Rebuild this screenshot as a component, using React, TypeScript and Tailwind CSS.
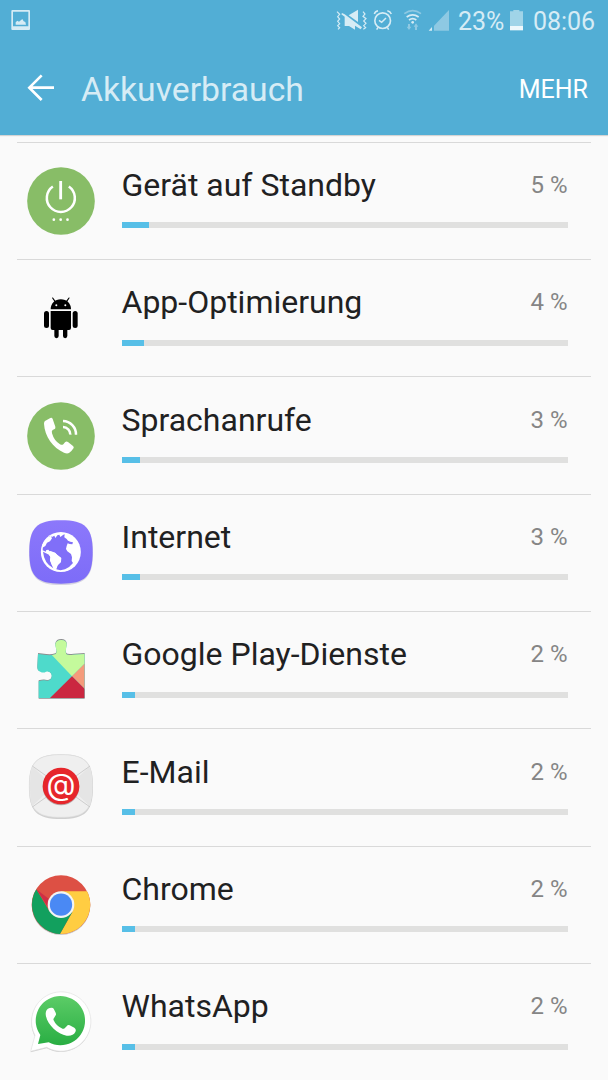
import React from 'react';

interface Consumer {
  name: string;
  percent: string;
  bar: number;
  icon: React.ReactNode;
}

const StandbyIcon = () => (
  <svg viewBox="51 35 204 204" className="size-[68px]">
    <circle cx="153" cy="137" r="101.500" fill="#88bd67" />
    <g fill="none" stroke="#fff" strokeWidth="7.5">
      <path d="M128.500 93.500A42 42 0 1 0 176.500 93.500" />
      <path d="M152 77V132" strokeWidth="8.500" />
    </g>
    <g fill="#fff">
      <circle cx="131.500" cy="193" r="4" />
      <circle cx="152" cy="193" r="4" />
      <circle cx="172.500" cy="193" r="4" />
    </g>
  </svg>
);

const AndroidIcon = () => (
  <svg viewBox="51 12 204 204" className="size-[68px]">
    <path d="M122 88C122 70 135 58 152.500 58S183 70 183 88Z" />
    <path d="M135 64L128 54M170 64L177 54" stroke="#000" strokeWidth="3.500" strokeLinecap="round" />
    <circle cx="139" cy="76" r="3" fill="#fafafa" />
    <circle cx="166" cy="76" r="3" fill="#fafafa" />
    <path d="M122 93H183V144Q183 150 177 150H172V168A6.500 6.500 0 0 1 159 168V150H146V168A6.500 6.500 0 0 1 133 168V150H128Q122 150 122 144Z" />
    <rect x="102" y="93" width="15" height="51" rx="7.500" />
    <rect x="188" y="93" width="15" height="51" rx="7.500" />
  </svg>
);

const CallIcon = () => (
  <svg viewBox="51 34 204 204" className="size-[68px]">
    <circle cx="153" cy="136" r="101.500" fill="#88bd67" />
    <path
      d="M105 91Q102 93 102 99C104 137 129 171 162 186Q171 190 177 187Q184 183 191 172Q192 169 189 166L174 154Q169 151 165 155L160 161Q156 164 150 161Q132 150 126 128Q124 120 128 118L134 115Q137 113 136 108L128 85Q126 80 121 82Z"
      fill="#fff"
    />
    <path d="M159 109A22 22 0 0 1 181 132M159 91A40 40 0 0 1 198 132" fill="none" stroke="#fff" strokeWidth="7.500" />
  </svg>
);

const InternetIcon = () => (
  <svg viewBox="51 26 204 204" className="size-[68px]">
    <defs>
      <linearGradient id="internet" x1="0" y1="0" x2="0" y2="1">
        <stop offset="0" stopColor="#8c78fb" />
        <stop offset="1" stopColor="#7d6cf8" />
      </linearGradient>
    </defs>
    <path d="M57 127C57 55 80 32 153 32S249 55 249 127S226 224 153 224S57 199 57 127Z" fill="#d5d3e2" />
    <path d="M58 125C58 52 80 30 153 30S248 52 248 125S226 220 153 220S58 198 58 125Z" fill="url(#internet)" />
    <circle cx="152.500" cy="125" r="60" fill="#fff" />
    <path
      d="M98 120C98 101 107 84 121 76L126 80L133 76L136 83L142 75L148 73L151 80L160 73L164 72L163 81L170 86L174 91L181 94L189 96L187 102L179 101L173 99L170 107L168 116L172 123L183 131L186 141L185 152L189 158Q178 172 165 177Q151 182 139 177L143 165L153 155L153 143L142 134L135 127L126 126L120 124L115 118L109 119L107 124Z"
      fill="#806ff8"
    />
    <path d="M99 124L108 129L117 133L121 140L120 150L125 163L130 174Q102 158 99 124Z" fill="#806ff8" />
    <path d="M115 124L122 122L135 127L142 134L154 143L153 154L143 164L139 173L132 174L126 164L120 150L122 140L117 133Z" fill="#fff" />
    <path d="M97 104Q106 82 122 76L126 84L120 93L111 97L106 107L97 112Z" fill="#fff" />
  </svg>
);

const PlayServicesIcon = () => (
  <svg viewBox="51 33 204 204" className="size-[68px]">
    <defs>
      <clipPath id="puzzle">
        <path d="M84 87L109 90Q137 92 139 84Q142 79 138 70L136 59Q138 45 154 45Q168 45 170 57L168 72Q165 83 169 88Q172 91 191 89L224 87V219H86V169Q101 163 112 167Q125 165 125 152Q123 138 108 140Q100 145 91 140Q81 138 82 124Z" />
      </clipPath>
    </defs>
    <path d="M84 84L109 87Q137 89 139 81Q142 76 138 67L136 55Q138 42 154 42Q168 42 170 54L168 69Q165 80 169 84Q172 88 191 86L224 84V221H86V166Q101 160 112 164Q125 162 125 149L112 137L91 139Q81 138 82 124Z" fill="#8d8f90" />
    <path d="M125 152Q123 138 108 140Q100 145 91 140L82 139V166Q101 160 112 165Q125 163 125 152Z" fill="#fafafa" />
    <g clipPath="url(#puzzle)">
      <rect x="78" y="40" width="150" height="182" fill="#4edacb" />
      <path d="M78 40H228V112L186 154Z" fill="#c4fa9c" />
      <path d="M186 154L226 114V194Z" fill="#f49b7b" />
      <path d="M186 154L118 221H226V194Z" fill="#cb2740" />
    </g>
  </svg>
);

const EmailIcon = () => (
  <svg viewBox="51 25 204 204" className="size-[68px]">
    <path d="M57 126C57 52 80 29 153 29S249 52 249 126S226 223 153 223S57 200 57 126Z" fill="#cfcfcf" />
    <path d="M58 124C58 52 80 30 153 30S247 52 247 124S226 218 153 218S58 196 58 124Z" fill="#efefef" stroke="#dedede" strokeWidth="2" />
    <path d="M66 64L129 125L66 185Q53 125 66 64ZM240 64L177 125L240 185Q253 125 240 64Z" fill="#e5e5e5" />
    <path d="M67 64L240 187M240 64L67 187" stroke="#bdbdbd" strokeWidth="2" />
    <circle cx="153" cy="127" r="55" fill="#b9a5a5" />
    <circle cx="153" cy="124" r="55" fill="#e6262b" />
    <text x="153" y="152" textAnchor="middle" fontSize="90" fontWeight="400" fill="#fff" fontFamily="Inter, sans-serif">@</text>
  </svg>
);

const ChromeIcon = () => (
  <svg viewBox="51 17 204 204" className="size-[68px]">
    <circle cx="153" cy="121" r="88" fill="#c8c8c8" />
    <circle cx="153" cy="118" r="88" fill="#dd5044" />
    <path d="M153 78H231A88 88 0 0 1 150 206L187 140Z" fill="#ffcd42" />
    <path d="M79 72L118 138L187 140L150 206A88 88 0 0 1 79 72Z" fill="#12a05e" />
    <path d="M79 72L113 124L117 101Z" fill="#d12e45" />
    <circle cx="153" cy="118" r="40" fill="#f4f4f4" />
    <circle cx="153" cy="118" r="33.500" fill="#4a89f4" />
  </svg>
);

const WhatsAppIcon = () => (
  <svg viewBox="51 24 204 204" className="size-[68px]">
    <defs>
      <linearGradient id="whatsapp" x1="0" y1="0" x2="0" y2="1">
        <stop offset="0" stopColor="#5ccc67" />
        <stop offset="1" stopColor="#29ae43" />
      </linearGradient>
    </defs>
    <path d="M62 217L75 170A89 89 0 1 1 110 205Z" fill="#cfcfcf" />
    <path d="M62 214L75 166A89 89 0 1 1 110 202Z" fill="#fff" stroke="#e1e1e1" strokeWidth="2" />
    <path d="M84 192L91 165A74 74 0 1 1 116 187Z" fill="url(#whatsapp)" />
    <path
      d="M119 84Q107 88 107 101C108 130 141 163 170 167Q189 169 196 156Q200 148 193 143L179 136Q174 133 170 139L164 145Q160 148 155 145Q138 137 131 121Q129 117 132 114L137 106Q139 103 137 98L131 86Q129 82 119 84Z"
      fill="#fff"
    />
  </svg>
);

const consumers: Consumer[] = [
  { name: 'Gerät auf Standby', percent: '5 %', bar: 27, icon: <StandbyIcon /> },
  { name: 'App-Optimierung', percent: '4 %', bar: 22.5, icon: <AndroidIcon /> },
  { name: 'Sprachanrufe', percent: '3 %', bar: 18.2, icon: <CallIcon /> },
  { name: 'Internet', percent: '3 %', bar: 18.2, icon: <InternetIcon /> },
  { name: 'Google Play-Dienste', percent: '2 %', bar: 13.5, icon: <PlayServicesIcon /> },
  { name: 'E-Mail', percent: '2 %', bar: 13.5, icon: <EmailIcon /> },
  { name: 'Chrome', percent: '2 %', bar: 13.5, icon: <ChromeIcon /> },
  { name: 'WhatsApp', percent: '2 %', bar: 13.5, icon: <WhatsAppIcon /> },
];

const StatusBar = () => (
  <div className="flex h-[42px] items-center pl-[10px] pr-[13px] text-[25px] leading-[42px] text-[#d6ecf5]">
    <svg viewBox="30 0 63 126" className="h-[42px] w-[21px]">
      <path d="M37 30H87Q90 30 90 33V87Q90 90 87 90H37Q34 90 34 87V33Q34 30 37 30ZM39 35V79H85V35Z" fill="currentColor" fillRule="evenodd" />
      <path d="M47 74V67L52 62L57 65L67 57L71 64L76 66L78 74Z" fill="currentColor" />
    </svg>
    <div className="ml-auto flex items-center">
      {/* vibrate */}
      <svg viewBox="18 0 96 126" className="h-[42px] w-8">
        <path d="M36 39L44 43L96 82L92 88L75 77V89L57 78H44V50L34 43ZM56 46L84 29V66Z" fill="currentColor" />
        <path d="M21 35L29 43L23 50L29 57L23 64L29 71L23 77L29 83L24 88M99 35L105 42L99 49L108 56L101 63L108 70L101 77L107 83L100 88" fill="none" stroke="currentColor" strokeWidth="3.500" />
      </svg>
      {/* alarm */}
      <svg viewBox="129 0 60 126" className="ml-[5px] h-[42px] w-5" fill="none" stroke="currentColor">
        <circle cx="158" cy="62" r="23.500" strokeWidth="5" />
        <path d="M133 42Q135 34 144 32M172 32Q181 34 184 42M144 82L140 89M172 82L176 89M147 61L155 67L168 54" strokeWidth="4.500" />
      </svg>
      {/* wifi */}
      <svg viewBox="219 0 60 126" className="ml-[10px] h-[42px] w-5" fill="none" stroke="currentColor" strokeWidth="5">
        <path d="M223 41Q248 23 273 41" opacity=".45" />
        <path d="M230 51Q248 38 266 51M237 60Q248 52 259 60" />
        <circle cx="248" cy="67" r="4" fill="currentColor" stroke="none" />
        <path d="M234 72H240V80H244L237 90L230 80H234ZM255 90H261V80H265L258 70L251 80H255Z" fill="currentColor" stroke="none" opacity=".45" />
      </svg>
      {/* signal */}
      <svg viewBox="294 0 66 126" className="ml-[5px] h-[42px] w-[22px]" fill="currentColor">
        <path d="M357 30V92H312V77Z" opacity=".45" />
        <path d="M296 92L306 81V92Z" />
      </svg>
      <span className="ml-2 w-[47px] pt-[2px]">23%</span>
      <svg viewBox="0 0 45 126" className="ml-1 h-[42px] w-[15px]" fill="currentColor">
        <path d="M3 34H13V30H31V34H42V78H3Z" opacity=".6" />
        <path d="M3 78H42V91H3Z" fill="#eef8fc" />
      </svg>
      <span className="ml-[9px] pt-[2px] tracking-[-0.05px]">08:06</span>
    </div>
  </div>
);

const ConsumerRow = ({ name, percent, bar, icon }: Consumer) => (
  <li className="flex h-[117.33px] shrink-0 items-center border-t border-[#d9d9d9] pl-[9.5px] pr-[23.5px]">
    <div className="flex size-[68px] shrink-0">{icon}</div>
    <div className="ml-[27px] flex h-full flex-1 flex-col pt-[22.4px]">
      <div className="flex h-10 justify-between">
        <span className="text-[32px] leading-10 text-[#1f2122]">{name}</span>
        <span className="text-[24px] leading-[41px] text-[#858585]">{percent}</span>
      </div>
      <div className="mt-[17.3px] h-[6px] bg-[#e0e0df]">
        <div className="h-full bg-[#57bfe7]" style={{ width: bar }} />
      </div>
    </div>
  </li>
);

export default function App() {
  return (
    <div className="flex h-[1080px] w-[608px] flex-col overflow-hidden bg-[#fafafa] font-['Roboto',sans-serif]">
      <header className="h-[135px] shrink-0 bg-[#52aed5] shadow-[0_1px_1px_rgba(0,0,0,0.15)]">
        <StatusBar />
        <div className="flex h-[93px] items-center pl-[26px] pr-5">
          <svg viewBox="78 210 87 105" className="mb-[2px] h-[35px] w-[29px] shrink-0" fill="none" stroke="#fff" strokeWidth="8">
            <path d="M162 263H88M125 226L88 263L125 300" />
          </svg>
          <h1 className="ml-[26px] pt-[2px] text-[33.7px] leading-10 text-[#d6ecf5]">Akkuverbrauch</h1>
          <button className="ml-auto pt-[3px] text-[25px] leading-10 text-white">MEHR</button>
        </div>
      </header>
      <ul className="mt-[6.7px] flex flex-col px-[17px]">
        {consumers.map((c) => (
          <ConsumerRow key={c.name} {...c} />
        ))}
      </ul>
    </div>
  );
}
